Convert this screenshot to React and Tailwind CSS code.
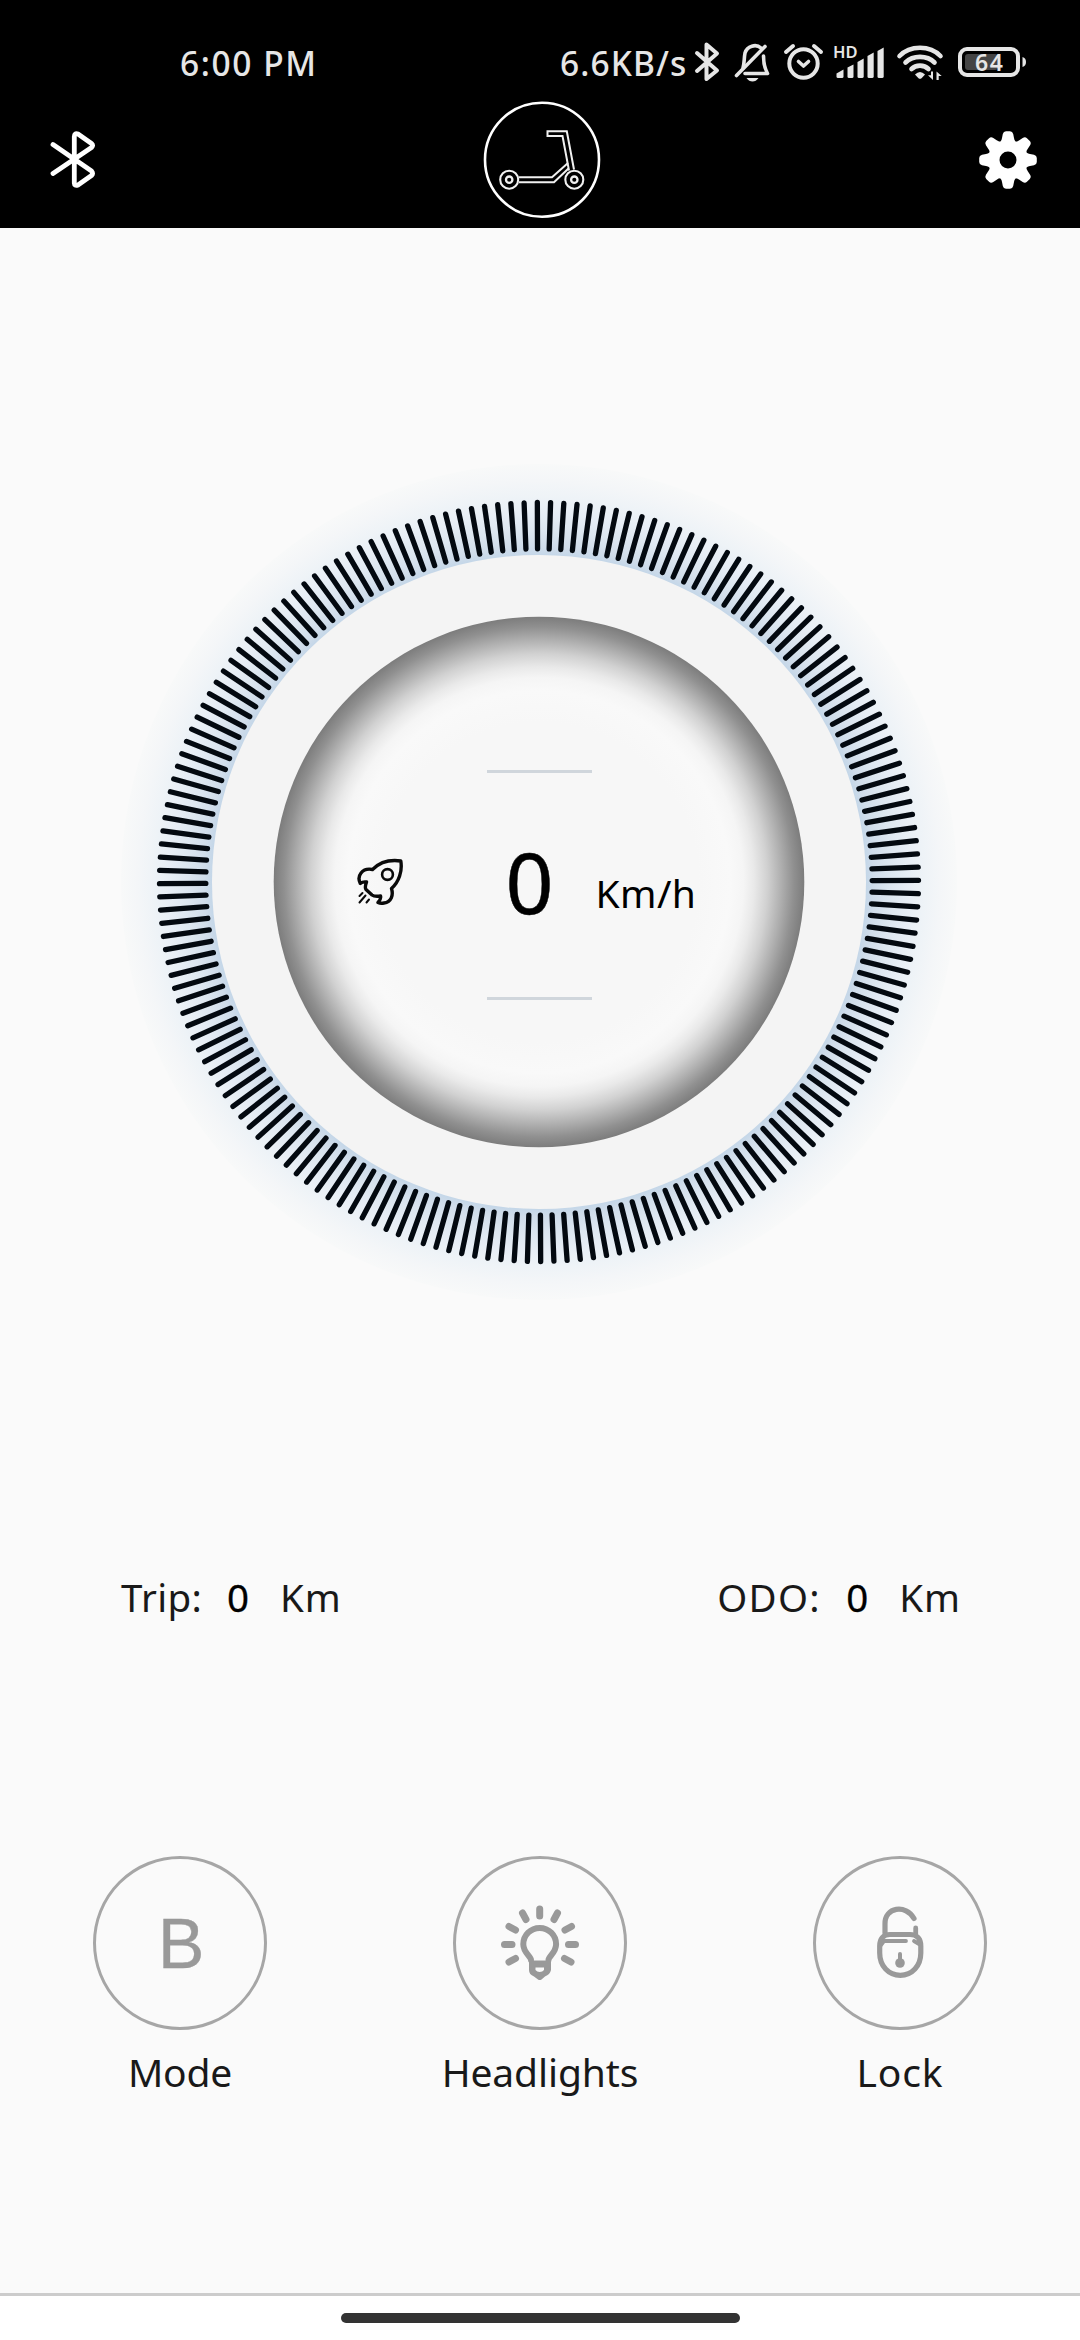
const TICKS = Array.from({ length: 180 }, (_, i) => i * 2 - 0.25);

const CONTROLS = [
  { label: 'Mode', icon: 'mode', text: 'tracking-[-0.2px]' },
  { label: 'Headlights', icon: 'light', text: 'tracking-[-0.1px]' },
  { label: 'Lock', icon: 'lock', text: 'tracking-[0.9px]' },
];

const StatusIcons = () => (
  <svg className="h-[44px] w-[340px]" viewBox="690 40 340 44" fill="none" stroke="#e6e6e6" strokeLinecap="round" strokeLinejoin="round">
    {/* bluetooth */}
    <path strokeWidth="4" d="M697 53L717 70.500L706.500 79V44.500L717 53.500L697 71" />
    {/* muted bell */}
    <g strokeWidth="3.600">
      <path d="M743 68C744.500 63 744 58 745 53C747 46 756 43.500 761 48" />
      <path d="M763.500 56C763.500 64 765 69 767.500 73.500H745" />
      <path d="M736.500 75.500L765 46.500" />
    </g>
    <path stroke="none" fill="#e6e6e6" d="M746.500 78H758.500Q756 81.500 752.500 81.500Q749 81.500 746.500 78Z" />
    {/* alarm */}
    <circle cx="803.500" cy="63.500" r="14.200" strokeWidth="4" />
    <path strokeWidth="3.600" d="M798.500 61.500L803.500 66L808.500 61.500" />
    <path strokeWidth="4" d="M786 52L793 46M821 52L814 46" />
    {/* signal */}
    <g stroke="none" fill="#e6e6e6">
      <text x="833" y="58.200" fontSize="16.500" fontWeight="600" fontFamily="Noto Sans, sans-serif" textLength="24.500">HD</text>
      <path d="M836.500 76.500V73.500L843.500 69.500V76.500Q843.500 78 842 78H838Q836.500 78 836.500 76.500Z" />
      <path d="M847.500 76.500V67.500L853.500 64.500V76.500Q853.500 78 852 78H849Q847.500 78 847.500 76.500Z" />
      <path d="M857.500 76.500V62L863.700 58.500V76.500Q863.700 78 862 78H859Q857.500 78 857.500 76.500Z" />
      <path d="M867.500 76.500V56L873.700 52.500V76.500Q873.700 78 872 78H869Q867.500 78 867.500 76.500Z" />
      <path d="M877.500 76.500V51L883.700 47.500V76.500Q883.700 78 882 78H879Q877.500 78 877.500 76.500Z" />
      <path d="M915 74.500Q920 69.500 925 74.500L921.500 78.200Q920 79.400 918.500 78.200Z" />
      <path d="M933 71.500V80L928 75.300H931V71.500ZM936.500 80V71.500L941.700 76H938.700V80Z" />
    </g>
    {/* wifi */}
    <g strokeWidth="4.600">
      <path d="M899.500 56C910 45 930 45 940.500 56" />
      <path d="M905.500 62.500C913 55 927 55 934.500 62.500" />
      <path d="M911.500 69C916 64.500 924 64.500 928.500 69" />
    </g>
    {/* battery */}
    <rect x="960" y="49" width="58" height="26" rx="7" strokeWidth="4" />
    <rect x="965" y="54" width="33" height="16" rx="3" fill="#444444" stroke="none" />
    <path stroke="none" fill="#e6e6e6" d="M1022.500 57Q1026 58 1026 62Q1026 66 1022.500 67Z" />
    <text x="975" y="70.800" fontSize="23" fontWeight="600" fontFamily="Noto Sans, sans-serif" fill="#e6e6e6" stroke="none" textLength="28">64</text>
  </svg>
);

const BluetoothIcon = () => (
  <svg className="h-[60px] w-[48px]" viewBox="48 130 48 60" fill="none" stroke="#fff" strokeWidth="4.800" strokeLinecap="round" strokeLinejoin="round">
    <path d="M53 144.500L91.500 171Q93.500 173.500 91.500 175.500L78 185Q74.500 186.500 74.300 183V136.500Q74.500 132.500 78 134L91.500 143.500Q93.500 145.500 91.500 147.500L53 173.500" />
  </svg>
);

const ScooterLogo = () => (
  <svg className="ml-[9px] size-[120px]" viewBox="481 100 120 120" fill="none" stroke="#fff">
    <circle cx="541" cy="159.700" r="57" strokeWidth="2.600" />
    <g strokeWidth="2" stroke="#f0f0f0">
      <circle cx="508.200" cy="179.700" r="9" strokeWidth="2.100" />
      <circle cx="508.200" cy="179.700" r="3.200" strokeWidth="2.300" />
      <circle cx="573.300" cy="179.700" r="9" strokeWidth="2.100" />
      <circle cx="573.300" cy="179.700" r="3.200" strokeWidth="2.300" />
      <path d="M518 177.300H551L567 163M518 182.300H553L567.500 168.500" />
      <path d="M568 170.500L561.500 136H546.500V131.300H565.800L573 169.500" />
    </g>
  </svg>
);

const GearIcon = () => (
  <svg className="size-[60px]" viewBox="-30 -30 60 60">
    <g fill="#fff">
      {[0, 45, 90, 135, 180, 225, 270, 315].map((a) => (
        <path key={a} transform={`rotate(${a})`} d="M-10 -17Q-6.500 -18 -6 -22L-5.200 -26Q-4.500 -28.800 -2 -28.800H2Q4.500 -28.800 5.200 -26L6 -22Q6.500 -18 10 -17Z" />
      ))}
      <circle r="14" fill="none" stroke="#fff" strokeWidth="11" />
    </g>
  </svg>
);

const RocketIcon = () => (
  <svg className="h-[50px] w-[50px]" viewBox="355 856 50 50" fill="none" stroke="#0a0a0a" strokeWidth="3.400" strokeLinecap="round" strokeLinejoin="round">
    <path d="M372.500 868.500C380 861 390 858.500 400.800 860C402.500 870 399 881 391.500 887.500C393.500 894 391.500 901 384 902C382 902.300 379.500 902.200 378 901.500C380.500 899 381 897 380.500 895C377 895.500 374 895.500 372 894L366 888.500C364.500 886.500 365.500 884.500 366.500 881C363.500 880.500 361.500 881.500 360.300 882.500C356.500 875 362 866.500 372.500 868.500Z" />
    <circle cx="387.500" cy="873.500" r="5.400" strokeWidth="2.600" />
    <path strokeWidth="2" d="M359.500 895L362.500 892M359.500 901.500L365.500 894.500M366.500 901.500L369 898.500" />
  </svg>
);

const Gauge = () => (
  <div className="relative size-[840px]">
    <svg className="size-full" viewBox="-420 -420 840 840">
      <defs>
        <radialGradient id="glow" gradientUnits="userSpaceOnUse" cx="0" cy="0" r="418">
          <stop offset="0.780" stopColor="#c3d6e8" />
          <stop offset="0.800" stopColor="#cfdcea" />
          <stop offset="0.840" stopColor="#dce6f0" />
          <stop offset="0.880" stopColor="#e6edf5" />
          <stop offset="0.920" stopColor="#eef3f7" />
          <stop offset="0.960" stopColor="#f4f6f8" />
          <stop offset="1" stopColor="#f8f9f9" />
        </radialGradient>
        <radialGradient id="dial" gradientUnits="userSpaceOnUse" cx="0" cy="0" r="265.500">
          <stop offset="0.600" stopColor="#f7f7f7" />
          <stop offset="0.720" stopColor="#f9f9f9" />
          <stop offset="0.770" stopColor="#f5f5f5" />
          <stop offset="0.810" stopColor="#e9e9e9" />
          <stop offset="0.860" stopColor="#d1d1d1" />
          <stop offset="0.910" stopColor="#b1b1b1" />
          <stop offset="0.960" stopColor="#909090" />
          <stop offset="1" stopColor="#7c7c7c" />
        </radialGradient>
      </defs>
      <circle r="418" fill="url(#glow)" />
      <circle r="327" fill="#f4f4f4" />
      <g stroke="#030910" strokeWidth="5.300" strokeLinecap="round">
        {TICKS.map((a) => (
          <line key={a} y1="-333.200" y2="-379.500" transform={`rotate(${a})`} />
        ))}
      </g>
      <circle r="265.300" fill="url(#dial)" />
    </svg>
    <div className="absolute inset-0 flex flex-col items-center justify-center pt-[5px]">
      <div className="h-[3px] w-[105px] bg-[#d0d6dc]" />
      <div className="flex h-[224px] w-[365px] items-center">
        <div className="mt-[-6px] ml-[-2px] w-[146px]"><RocketIcon /></div>
        <div className="mt-[-5px] flex flex-1 items-baseline">
          <span className="w-[95px] pl-[5px] text-[84px] leading-[100px] text-black [-webkit-text-stroke:0.500px_black]">0</span>
          <span className="relative top-[-6px] text-[39px] tracking-[0.400px] text-black">Km/h</span>
        </div>
      </div>
      <div className="h-[3px] w-[105px] bg-[#d0d6dc]" />
    </div>
  </div>
);

const Reading = ({ label, width }) => (
  <div className="flex items-baseline text-[38.500px] text-[#191919]">
    <span className={width}>{label}:</span>
    <span className="w-[53px] text-[38.500px] text-black [-webkit-text-stroke:0.300px_black]">0</span>
    <span className="tracking-[1px]">Km</span>
  </div>
);

const LightIcon = () => (
  <svg className="size-[90px]" viewBox="495 1898 90 90" fill="none" stroke="#999" strokeLinecap="round">
    <path strokeWidth="7" d="M539.700 1909V1916M522.500 1913L526 1919.500M557.500 1913L554 1919.500M509 1926.500L515.500 1930M571.500 1926.500L565 1930M504.500 1944.500H512M568.500 1944.500H575.500M515.500 1958.500L509 1962M564.500 1958.500L571 1962" />
    <path strokeWidth="6" d="M531 1960C531 1956 523.300 1953 523.300 1944.300A16.400 16.400 0 0 1 556.100 1944.300C556.100 1953 548.500 1956 548.500 1960" />
    <path fill="#999" stroke="none" fillRule="evenodd" d="M529 1960.500H551V1970Q550 1974.500 545 1976.500L541.500 1979.500Q539.700 1980.500 538 1979.500L534 1976.500Q529 1974.500 529 1970ZM535.500 1967.500V1970Q537 1972 539.700 1972Q542.500 1972 544 1970V1967.500Z" />
  </svg>
);

const LockIcon = () => (
  <svg className="size-[90px]" viewBox="855 1898 90 90" fill="none" stroke="#999" strokeLinecap="round" strokeWidth="5.200">
    <path d="M885 1933V1924C884.500 1907 906 1904 914 1918.500" />
    <path d="M915.700 1928V1935" strokeWidth="4.800" />
    <path d="M890 1934.500H910C917 1934.500 920.800 1939 920.800 1946V1953C920.800 1966 912 1975.300 900.300 1975.300S879.700 1966 879.700 1953V1946C879.700 1939 883 1934.500 890 1934.500Z" />
    <path strokeWidth="3.800" d="M884 1941H906M914 1941L919 1944M881 1945L884 1941" />
    <circle cx="900" cy="1963" r="4.800" fill="#999" stroke="none" />
    <path strokeWidth="4" d="M900 1954V1962" />
  </svg>
);

const Control = ({ label, icon, text }) => (
  <div className="flex w-[360px] flex-col items-center">
    <button className="flex size-[174px] items-center justify-center rounded-full border-[3px] border-[#a6a6a6]">
      {icon === 'mode' && <span className="pt-[1px] pl-[2px] font-['Liberation_Sans'] text-[70px] leading-none text-[#999] [-webkit-text-stroke:0.300px_#999]">B</span>}
      {icon === 'light' && <LightIcon />}
      {icon === 'lock' && <LockIcon />}
    </button>
    <span className={`mt-[16px] text-[39px] leading-[52px] text-[#191919] ${text}`}>{label}</span>
  </div>
);

export default function App() {
  return (
    <div className="flex h-[2340px] w-[1080px] flex-col bg-[#fafafa] font-['Noto_Sans',sans-serif]">
      <header className="h-[228px] bg-black">
        <div className="flex h-[100px] items-start pt-[40px] pl-[180px] text-[33.500px] leading-[46px] font-medium text-[#e6e6e6]">
          <span className="w-[380px] tracking-[1.600px]">6:00 PM</span>
          <span className="w-[130px] tracking-[1.100px]">6.6KB/s</span>
          <StatusIcons />
        </div>
        <div className="flex h-[120px] items-center justify-between pr-[42px] pl-[48px]">
          <BluetoothIcon />
          <ScooterLogo />
          <GearIcon />
        </div>
      </header>
      <main className="flex flex-1 flex-col">
        <div className="mt-[234px] ml-[119px]">
          <Gauge />
        </div>
        <div className="mt-[268px] flex h-[56px] items-center justify-between pr-[119px] pl-[121px]">
          <Reading label="Trip" width="w-[106px] tracking-[0.400px]" />
          <Reading label="ODO" width="w-[129px] tracking-[1.300px]" />
        </div>
        <div className="mt-[230px] flex">
          {CONTROLS.map((c) => (
            <Control key={c.label} {...c} />
          ))}
        </div>
      </main>
      <footer className="flex h-[47px] justify-center border-t-[3px] border-[#ccc] bg-white pt-[17px]">
        <div className="h-[10px] w-[399px] rounded-full bg-[#333]" />
      </footer>
    </div>
  );
}
